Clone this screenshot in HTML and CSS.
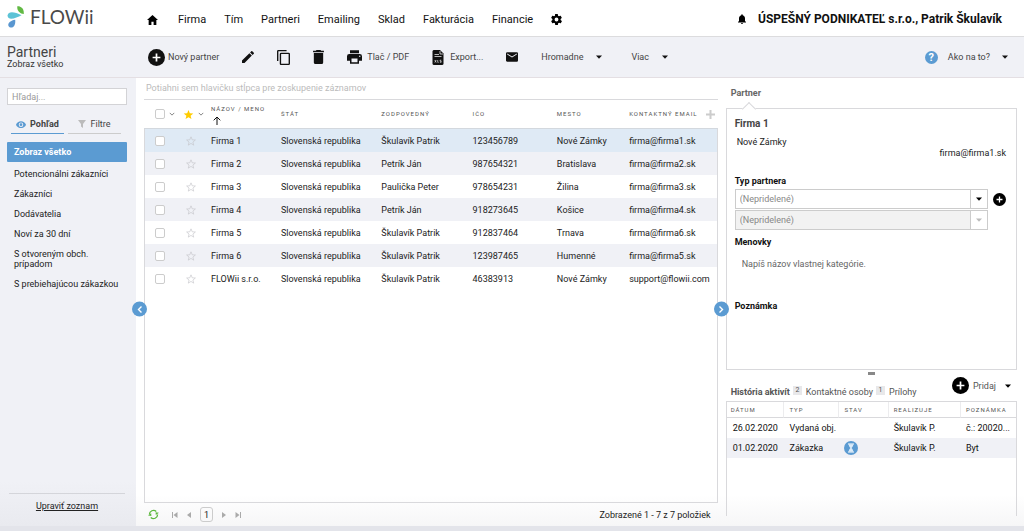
FILE: index.html
```html
<!DOCTYPE html>
<html lang="sk">
<head>
<meta charset="utf-8">
<meta name="viewport" content="width=device-width, initial-scale=1">
<title>FLOWii – Partneri</title>
<link rel="stylesheet" href="styles.css">
</head>
<body>
<svg class="defs" aria-hidden="true">
  <symbol id="plus-circle" viewBox="0 0 24 24"><circle cx="12" cy="12" r="12"/><path d="M12 6.500v11M6.500 12h11" stroke="#fff" stroke-width="2.400"/></symbol>
  <symbol id="star" viewBox="0 0 24 24"><path d="M12 2l2.900 7.100 7.600.500-5.900 4.900 1.900 7.400L12 17.800l-6.500 4.100 1.900-7.400L1.500 9.600l7.600-.500z"/></symbol>
  <symbol id="caret" viewBox="0 0 6 4"><path d="M0 .500h6L3 3.700z"/></symbol>
  <symbol id="chevron" viewBox="0 0 8 5"><path d="M1 1l3 3 3-3" fill="none" stroke="#777" stroke-width="1.200"/></symbol>
</svg>

<header class="topbar">
  <a class="logo" href="#">
    <svg class="logo-mark" viewBox="0 0 17 22" aria-hidden="true">
      <path fill="#62b944" d="M10.300.300c3.500-.300 6.800 1.900 6.500 7.600-3.900-.100-7-3.200-6.500-7.600z"/>
      <path fill="#5cc3d6" d="M.500 9.600C1.500 4.500 8 6 14.500 9.300 9.500 12 1 15.500.500 9.600z"/>
      <path fill="#5a97d0" d="M8.200 13.800c.500 4.200-1.200 8.400-4.600 7.700-4.300-1.200-2.600-6.600 4.600-7.700z"/>
    </svg>
    <span>FLOWii</span>
  </a>
  <nav class="mainnav">
    <a href="#" class="home" aria-label="Domov"><svg viewBox="0 0 20 18" width="11" height="10"><path d="M10 0l10 9h-3v9h-5v-6H8v6H3V9H0z"/></svg></a>
    <a href="#">Firma</a><a href="#">Tím</a><a href="#">Partneri</a><a href="#">Emailing</a><a href="#">Sklad</a><a href="#">Fakturácia</a><a href="#">Financie</a>
    <a href="#" aria-label="Nastavenia"><svg viewBox="2 2 20 20" width="11" height="11"><path d="M19.400 13c0-.300.100-.600.100-1s0-.700-.100-1l2.100-1.600c.200-.200.300-.400.100-.600l-2-3.500c-.100-.200-.400-.300-.600-.200l-2.500 1c-.500-.400-1.100-.700-1.700-1l-.400-2.600c0-.300-.200-.500-.500-.500h-4c-.200 0-.400.200-.500.400L9.200 5.100c-.600.200-1.200.600-1.700 1l-2.500-1c-.200-.100-.500 0-.600.200l-2 3.500c-.100.200-.100.500.100.600L4.600 11c0 .300-.100.700-.100 1s0 .700.100 1l-2.100 1.600c-.200.200-.300.400-.100.600l2 3.500c.100.200.400.300.600.200l2.500-1c.500.400 1.100.700 1.700 1l.400 2.600c0 .200.200.400.500.400h4c.200 0 .500-.200.500-.400l.400-2.600c.600-.300 1.200-.600 1.700-1l2.500 1c.200.100.500 0 .600-.200l2-3.500c.100-.200.100-.500-.100-.600zM12 15.500a3.500 3.500 0 110-7 3.500 3.500 0 010 7z"/></svg></a>
  </nav>
  <div class="account">
    <svg viewBox="4 2 16 20" width="8" height="10" aria-hidden="true"><path d="M12 22a2 2 0 002-2h-4a2 2 0 002 2zm6-6v-5c0-3.100-1.600-5.600-4.500-6.300V4a1.500 1.500 0 00-3 0v.700C7.600 5.400 6 7.900 6 11v5l-2 2v1h16v-1z"/></svg>
    <a href="#">ÚSPEŠNÝ PODNIKATEĽ s.r.o., Patrik Škulavík</a>
  </div>
</header>

<div class="toolbar">
  <div class="heading"><h1>Partneri</h1><p>Zobraz všetko</p></div>
  <div class="actions">
    <button type="button" class="new"><svg width="17" height="17"><use href="#plus-circle"/></svg>Nový partner</button>
    <button type="button" aria-label="Upraviť"><svg viewBox="3 3 18 18" width="12" height="12"><path d="M3 17.200V21h3.800L17.800 9.900l-3.700-3.700zM20.700 7a1 1 0 000-1.400l-2.300-2.300a1 1 0 00-1.400 0l-1.900 1.800 3.800 3.800z"/></svg></button>
    <button type="button" aria-label="Kopírovať"><svg viewBox="2 1 19 22" width="13" height="15"><path d="M16 1H4a2 2 0 00-2 2v14h2V3h12zm3 4H8a2 2 0 00-2 2v14c0 1.100.900 2 2 2h11a2 2 0 002-2V7a2 2 0 00-2-2zm0 16H8V7h11z"/></svg></button>
    <button type="button" aria-label="Vymazať"><svg viewBox="5 3 14 18" width="11" height="14"><path d="M6 19c0 1.100.900 2 2 2h8a2 2 0 002-2V7H6zM19 4h-3.500l-1-1h-5l-1 1H5v2h14z"/></svg></button>
    <button type="button"><svg viewBox="2 3 20 18" width="15" height="14"><path d="M19 8H5a3 3 0 00-3 3v6h4v4h12v-4h4v-6a3 3 0 00-3-3zm-3 11H8v-5h8zm3-7a1 1 0 110-2 1 1 0 010 2zM18 3H6v4h12z"/></svg>Tlač / PDF</button>
    <button type="button" class="export"><svg viewBox="0 0 12 15" width="12" height="15"><path d="M1.500 0H8l3.500 3.500v10A1.500 1.500 0 0110 15H2a1.500 1.500 0 01-1.500-1.500V1z"/><path d="M2.500 4.500H7M2.500 6.500h7M8 1v3h3" stroke="#fff" fill="none" stroke-width=".700"/><path d="M2.800 10l1.400 2.500M4.200 10l-1.400 2.500M5.700 10v2.300h1M9.300 10.200H8v1h1.200v1.100H7.900" stroke="#fff" fill="none" stroke-width=".600"/></svg>Export...</button>
    <button type="button" aria-label="E-mail"><svg viewBox="2 4 20 16" width="12" height="10"><path d="M20 4H4a2 2 0 00-2 2v12c0 1.100.900 2 2 2h16a2 2 0 002-2V6a2 2 0 00-2-2zm0 4l-8 5-8-5V6l8 5 8-5z"/></svg></button>
    <button type="button" class="menu">Hromadne<svg width="6" height="4"><use href="#caret"/></svg></button>
    <button type="button" class="menu">Viac<svg width="6" height="4"><use href="#caret"/></svg></button>
  </div>
  <button type="button" class="help"><span class="q">?</span>Ako na to?<svg width="6" height="4"><use href="#caret"/></svg></button>
</div>

<div class="workspace">
  <aside class="sidebar">
    <input class="search" type="search" placeholder="Hľadaj..." aria-label="Hľadaj">
    <div class="sidetabs">
      <button type="button" class="active"><svg viewBox="1 4 22 15" width="10" height="7"><path d="M12 4.500C7 4.500 2.700 7.600 1 12c1.700 4.400 6 7.500 11 7.500s9.300-3.100 11-7.500c-1.700-4.400-6-7.500-11-7.500zM12 17a5 5 0 110-10 5 5 0 010 10zm0-8a3 3 0 100 6 3 3 0 000-6z"/></svg>Pohľad</button>
      <button type="button"><svg viewBox="0 0 8 8" width="8" height="8"><path d="M0 0h8L5 4v4L3 6.500V4z"/></svg>Filtre</button>
    </div>
    <nav class="views">
      <a href="#" class="selected">Zobraz všetko</a>
      <a href="#">Potencionálni zákazníci</a>
      <a href="#">Zákazníci</a>
      <a href="#">Dodávatelia</a>
      <a href="#">Noví za 30 dní</a>
      <a href="#">S otvoreným obch. prípadom</a>
      <a href="#">S prebiehajúcou zákazkou</a>
    </nav>
    <div class="edit"><a href="#">Upraviť zoznam</a></div>
    <button type="button" class="collapse" aria-label="Skryť panel"><svg viewBox="0 0 8 8" width="8" height="8"><path d="M5.500 1L2.500 4l3 3"/></svg></button>
  </aside>

  <main class="content">
    <section class="list">
      <p class="grouphint">Potiahni sem hlavičku stĺpca pre zoskupenie záznamov</p>
      <table class="grid">
        <colgroup><col class="c-check"><col class="c-star"><col class="c-name"><col class="c-state"><col class="c-owner"><col class="c-ico"><col class="c-city"><col></colgroup>
        <thead>
          <tr>
            <th><span class="pick"><input type="checkbox" aria-label="Vybrať všetko"><svg width="6" height="4"><use href="#chevron"/></svg></span></th>
            <th><span class="pick"><svg class="gold" width="11" height="11"><use href="#star"/></svg><svg width="6" height="4"><use href="#chevron"/></svg></span></th>
            <th><span class="sorted">Názov / Meno<svg viewBox="0 0 8 9" width="8" height="9"><path d="M4 9V1M.700 4.300L4 1l3.300 3.300"/></svg></span></th>
            <th>Štát</th><th>Zodpovedný</th><th>IČO</th><th>Mesto</th>
            <th><span class="lasthead">Kontaktný email<button type="button" aria-label="Pridať stĺpec"><svg viewBox="0 0 9 9" width="9" height="9"><path d="M4.500 0v9M0 4.500h9"/></svg></button></span></th>
          </tr>
        </thead>
        <tbody>
          <tr class="current"><td><input type="checkbox" aria-label="Firma 1"></td><td><svg class="star"><use href="#star"/></svg></td><td>Firma 1</td><td>Slovenská republika</td><td>Škulavík Patrik</td><td>123456789</td><td>Nové Zámky</td><td>firma@firma1.sk</td></tr>
          <tr><td><input type="checkbox" aria-label="Firma 2"></td><td><svg class="star"><use href="#star"/></svg></td><td>Firma 2</td><td>Slovenská republika</td><td>Petrík Ján</td><td>987654321</td><td>Bratislava</td><td>firma@firma2.sk</td></tr>
          <tr><td><input type="checkbox" aria-label="Firma 3"></td><td><svg class="star"><use href="#star"/></svg></td><td>Firma 3</td><td>Slovenská republika</td><td>Paulička Peter</td><td>978654231</td><td>Žilina</td><td>firma@firma3.sk</td></tr>
          <tr><td><input type="checkbox" aria-label="Firma 4"></td><td><svg class="star"><use href="#star"/></svg></td><td>Firma 4</td><td>Slovenská republika</td><td>Petrík Ján</td><td>918273645</td><td>Košice</td><td>firma@firma4.sk</td></tr>
          <tr><td><input type="checkbox" aria-label="Firma 5"></td><td><svg class="star"><use href="#star"/></svg></td><td>Firma 5</td><td>Slovenská republika</td><td>Škulavík Patrik</td><td>912837464</td><td>Trnava</td><td>firma@firma6.sk</td></tr>
          <tr><td><input type="checkbox" aria-label="Firma 6"></td><td><svg class="star"><use href="#star"/></svg></td><td>Firma 6</td><td>Slovenská republika</td><td>Škulavík Patrik</td><td>123987465</td><td>Humenné</td><td>firma@firma5.sk</td></tr>
          <tr><td><input type="checkbox" aria-label="FLOWii s.r.o."></td><td><svg class="star"><use href="#star"/></svg></td><td>FLOWii s.r.o.</td><td>Slovenská republika</td><td>Škulavík Patrik</td><td>46383913</td><td>Nové Zámky</td><td>support@flowii.com</td></tr>
        </tbody>
      </table>
      <div class="rest"></div>
      <div class="pager">
        <button type="button" class="refresh" aria-label="Obnoviť"><svg viewBox="0 0 12 12" width="11" height="11"><path d="M1.500 6A4.500 4.500 0 019 2.700M10.500 6A4.500 4.500 0 013 9.300" fill="none" stroke="#5cb83c" stroke-width="1.400"/><path d="M12 4.500L8.500 7l-.200-3zM0 7.500L3.500 5l.200 3z" fill="#5cb83c" transform="translate(0 -.500)"/></svg></button>
        <button type="button" aria-label="Prvá"><svg viewBox="0 0 6 6" width="6" height="6"><path d="M0 0h1v6H0zM5.500 0v6L1.500 3z"/></svg></button>
        <button type="button" aria-label="Predchádzajúca"><svg viewBox="0 0 6 6" width="6" height="6"><path d="M5 0v6L1 3z"/></svg></button>
        <button type="button" class="page">1</button>
        <button type="button" aria-label="Nasledujúca"><svg viewBox="0 0 6 6" width="6" height="6"><path d="M1 0v6l4-3z"/></svg></button>
        <button type="button" aria-label="Posledná"><svg viewBox="0 0 6 6" width="6" height="6"><path d="M.500 0v6l4-3zM5 0h1v6H5z"/></svg></button>
        <span class="count">Zobrazené 1 - 7 z 7 položiek</span>
      </div>
      <button type="button" class="collapse" aria-label="Skryť detail"><svg viewBox="0 0 8 8" width="8" height="8"><path d="M2.500 1l3 3-3 3"/></svg></button>
    </section>

    <section class="detail">
      <h2 class="tab">Partner</h2>
      <div class="card">
        <h3>Firma 1</h3>
        <p class="city">Nové Zámky</p>
        <p class="mail">firma@firma1.sk</p>
        <label class="label" for="type">Typ partnera</label>
        <div class="typerow">
          <div class="selects">
            <span class="select"><select id="type"><option>(Nepridelené)</option></select><svg width="6" height="4"><use href="#caret"/></svg></span>
            <span class="select off"><select disabled aria-label="Podtyp partnera"><option>(Nepridelené)</option></select><svg width="6" height="4"><use href="#caret"/></svg></span>
          </div>
          <button type="button" aria-label="Pridať typ"><svg width="13" height="13"><use href="#plus-circle"/></svg></button>
        </div>
        <label class="label" for="tags">Menovky</label>
        <input id="tags" class="tags" type="text" placeholder="Napíš názov vlastnej kategórie.">
        <label class="label" for="note">Poznámka</label>
        <textarea id="note" class="note"></textarea>
      </div>
      <div class="splitter"></div>
      <div class="subtabs">
        <div class="tabset">
          <button type="button" class="active">História aktivít</button><span class="badge">2</span>
          <button type="button">Kontaktné osoby</button><span class="badge">1</span>
          <button type="button">Prílohy</button>
        </div>
        <button type="button" class="add"><svg width="17" height="17"><use href="#plus-circle"/></svg>Pridaj<svg width="6" height="4"><use href="#caret"/></svg></button>
      </div>
      <div class="history">
        <table>
          <colgroup><col class="h-date"><col class="h-type"><col class="h-stav"><col class="h-who"><col></colgroup>
          <thead><tr><th>Dátum</th><th>Typ</th><th>Stav</th><th>Realizuje</th><th>Poznámka</th></tr></thead>
          <tbody>
            <tr><td>26.02.2020</td><td>Vydaná obj.</td><td></td><td>Škulavík P.</td><td>č.: 20020...</td></tr>
            <tr><td>01.02.2020</td><td>Zákazka</td><td><svg class="wait" viewBox="0 0 14 14" width="14" height="14"><circle cx="7" cy="7" r="7" fill="#5b9bd2"/><path d="M4 3h6M4 11h6" stroke="#fff"/><path d="M4.700 3.300h4.600c0 2-1 2.700-1.700 3.700.700 1 1.700 1.700 1.700 3.700H4.700c0-2 1-2.700 1.700-3.700-.700-1-1.700-1.700-1.700-3.700z" fill="#dcebf8"/></svg></td><td>Škulavík P.</td><td>Byt</td></tr>
          </tbody>
        </table>
      </div>
    </section>
  </main>
</div>
<footer class="bottom"></footer>
</body>
</html>
```
FILE: styles.css
```css
* { box-sizing: border-box; }
body {
  margin: 0;
  min-height: 100vh;
  display: flex;
  flex-direction: column;
  background: #fff;
  color: #222;
  font: 9px/12px Roboto, "Liberation Sans", sans-serif;
}
h1, h2, h3, p { margin: 0; font-weight: 400; }
a { color: inherit; text-decoration: none; }
svg { display: block; flex: none; }
button { border: 0; padding: 0; background: none; color: inherit; font: inherit; display: flex; align-items: center; cursor: pointer; }
input, select, textarea { font: inherit; color: inherit; margin: 0; }
.defs { position: absolute; width: 0; height: 0; }

/* Top navigation */
.topbar { display: flex; align-items: center; height: 37px; padding: 0 22px 0 7px; border-bottom: 1px solid #dcdcde; }
.logo { display: flex; align-items: center; gap: 6px; width: 140px; padding-bottom: 2px; font: 19px/22px Lato, sans-serif; color: #4a4a4a; }
.logo-mark { width: 17px; height: 22px; }
.mainnav { display: flex; align-items: center; gap: 18px; padding-top: 3px; font-size: 11px; line-height: 16px; color: #111; }
.home { margin-right: 2px; }
.account { display: flex; align-items: center; gap: 12px; margin-left: auto; padding-top: 2px; font-size: 12px; line-height: 16px; font-weight: 700; color: #111; }

/* Toolbar */
.toolbar { display: flex; align-items: center; height: 41px; padding: 0 16px 0 7px; background: #f0f1f6; border-bottom: 1px solid #e4dfe3; color: #444; }
.heading { width: 141px; }
.heading h1 { font-size: 14px; line-height: 14px; color: #444; }
.heading p { line-height: 10px; color: #333; }
.actions { display: flex; align-items: center; gap: 23px; }
.actions button { gap: 5px; }
.actions .new { gap: 3px; }
.actions .export { gap: 6px; }
.actions .menu { gap: 13px; margin-right: 6px; }
.actions svg, .help svg { fill: #111; }
.help { gap: 10px; margin-left: auto; }
.help svg { margin-left: 2px; }
.q { width: 13px; height: 13px; border-radius: 50%; background: #5b9bd2; color: #fff; font-size: 11px; line-height: 13px; font-weight: 700; }

/* Layout */
.workspace { flex: 1; display: flex; }
.sidebar { position: relative; flex: none; width: 136px; padding: 10px 9px 14px 7px; display: flex; flex-direction: column; background: linear-gradient(#f0f1f6 90%, #e9eaef); }
.content { flex: 1; min-width: 0; display: grid; grid-template-columns: minmax(0, 63fr) minmax(0, 32fr); gap: 8px; padding: 0 7px 0 8px; background: linear-gradient(#fff 93%, #f6f6f7); }
.bottom { height: 5px; background: #e3e4ea; }

/* Sidebar */
.search { width: 100%; height: 17px; padding: 0 4px; border: 1px solid #d3d3d6; border-radius: 0; background: #fff; appearance: none; }
.search::placeholder { color: #999; }
.sidetabs { display: flex; gap: 4px; margin: 12px 6px 8px 4px; }
.sidetabs button { flex: 1 1 0; justify-content: center; gap: 4px; height: 17px; border-bottom: 1px solid #ccc; color: #444; padding-bottom: 2px; }
.sidetabs button.active { font-weight: 700; border-bottom-color: #5b9bd2; }
.sidetabs svg { fill: #bbb; }
.sidetabs .active svg { fill: #5b9bd2; }
.views { display: flex; flex-direction: column; }
.views a { padding: 5px 7px; line-height: 10px; color: #222; }
.views .selected { margin-bottom: 2px; background: #5b9bd2; border-radius: 1px; color: #fff; font-weight: 700; }
.edit { margin: auto 2px 0; padding-top: 6px; border-top: 1px solid #d4d5da; text-align: center; }
.edit a { text-decoration: underline; }
.collapse { position: absolute; top: calc(50% + 7px); right: -11px; transform: translateY(-50%); width: 15px; height: 15px; border-radius: 50%; justify-content: center; background: #5b9bd2; z-index: 1; }
.collapse path { fill: none; stroke: #fff; stroke-width: 1.400; }

/* Partner list */
.list { position: relative; display: flex; flex-direction: column; }
.grouphint { height: 22px; padding: 4px 2px; border-bottom: 1px solid #d9d9dc; color: #bbb; }
table { width: 100%; table-layout: fixed; border-spacing: 0; }
th, td { padding: 0; text-align: left; white-space: nowrap; }
th { font-size: 6px; font-weight: 400; letter-spacing: 1px; text-transform: uppercase; color: #555; }
.grid th { height: 29px; border-bottom: 1px solid #d3d8de; }
.grid td { height: 23px; }
.grid td:first-child { border-left: 1px solid #d9d9dc; padding-left: 10px; }
.grid th:first-child { padding-left: 11px; }
.grid td:last-child { border-right: 1px solid #d9d9dc; }
.grid tbody tr:nth-child(even) { background: #f0f1f6; }
.grid .current { background: #dfeaf5; }
.c-check { width: 39px; }
.c-star { width: 28px; }
.c-name { width: 12.2%; }
.c-state { width: 17.5%; }
.c-owner { width: 15.9%; }
.c-ico { width: 14.7%; }
.c-city { width: 12.6%; }
.grid input { appearance: none; display: block; width: 10px; height: 10px; border: 1px solid #ccc; border-radius: 2px; background: #fff; }
.pick { display: flex; align-items: center; gap: 4px; }
.star { width: 10px; height: 10px; margin-left: 3px; fill: none; stroke: #c4c4c8; stroke-width: 1.500; }
.gold { fill: #ffcc00; }
.sorted { display: flex; flex-direction: column; gap: 1px; }
.sorted svg { margin-left: 2px; fill: none; stroke: #111; }
.lasthead { display: flex; align-items: center; justify-content: space-between; padding-right: 3px; }
.lasthead svg { stroke: #ccc; stroke-width: 2; }
.rest { flex: 1; border: 1px solid #d9d9dc; border-top: 0; }
.pager { display: flex; align-items: center; gap: 8px; height: 23px; padding: 0 7px 0 4px; color: #222; }
.pager svg { fill: #aaa; }
.refresh { margin-right: 5px; }
.page { width: 13px; height: 15px; justify-content: center; border: 1px solid #ccc; border-radius: 3px; color: #222; }
.count { margin-left: auto; }

/* Detail */
.detail { display: flex; flex-direction: column; padding-bottom: 10px; }
.tab { position: relative; height: 30px; padding: 9px 5px; font-size: 9px; line-height: 12px; font-weight: 700; color: #666; }
.tab::after { content: ""; position: absolute; left: 18px; bottom: -6px; width: 9px; height: 9px; background: #fff; border: solid #d9d9dc; border-width: 1px 0 0 1px; transform: rotate(45deg); }
.card { flex: 244 1 0; display: flex; flex-direction: column; padding: 8px; border: 1px solid #d9d9dc; }
.card h3 { font-size: 10px; line-height: 14px; font-weight: 700; color: #444; }
.city { margin-top: 6px; padding-left: 2px; line-height: 10px; }
.mail { padding-right: 2px; line-height: 12px; text-align: right; }
.label { display: block; font-weight: 700; color: #111; }
.mail + .label { margin-top: 16px; }
.typerow { display: flex; align-items: flex-start; gap: 5px; margin: 2px 2px 6px 0; }
.typerow button { margin-top: 4px; }
.selects { flex: 1; display: grid; gap: 1px; }
.select { display: flex; align-items: center; height: 20px; border: 1px solid #ccc; }
.select select { appearance: none; flex: 1; height: 100%; border: 0; border-radius: 0; padding: 0 4px; background: #fff; color: #888; opacity: 1; }
.select svg { box-sizing: content-box; padding: 7px 5px; border-left: 1px solid #ccc; }
.off select { background: #f2f2f2; }
.off svg { fill: #bbb; }
.tags { height: 22px; margin: 5px 0 25px; padding: 0 7px; border: 0; background: none; }
.tags::placeholder { color: #666; }
.note { flex: 1 1 0; min-height: 20px; padding: 0; border: 0; resize: none; background: none; }
.splitter { width: 7px; height: 3px; margin: 2px auto 0; background: #888; }
.subtabs { display: flex; align-items: flex-start; justify-content: space-between; height: 26px; padding: 2px 6px 0 5px; color: #555; }
.tabset { display: flex; align-items: center; gap: 4px; padding-top: 9px; }
.tabset .active { font-weight: 700; }
.badge { width: 9px; height: 9px; margin: -3px 0 0 -1px; background: #e8e8ea; font-size: 7px; line-height: 9px; text-align: center; }
.add { gap: 4px; }
.add svg:last-child { margin-left: 5px; }
.history { flex: 114 1 0; border: 1px solid #d9d9dc; border-bottom: 0; }
.history th { height: 16px; padding-left: 5px; border-bottom: 1px solid #d9d9dc; border-right: 1px solid #ececee; }
.history th:first-child { padding-left: 4px; }
.history th:last-child { border-right: 0; }
.history td { height: 20px; padding-left: 5px; color: #111; }
.history td:first-child { padding-left: 6px; }
.history tbody tr:nth-child(even) { background: #f0f1f6; }
.h-date { width: 20%; }
.h-type { width: 19%; }
.h-stav { width: 17%; }
.h-who { width: 25%; }
```
